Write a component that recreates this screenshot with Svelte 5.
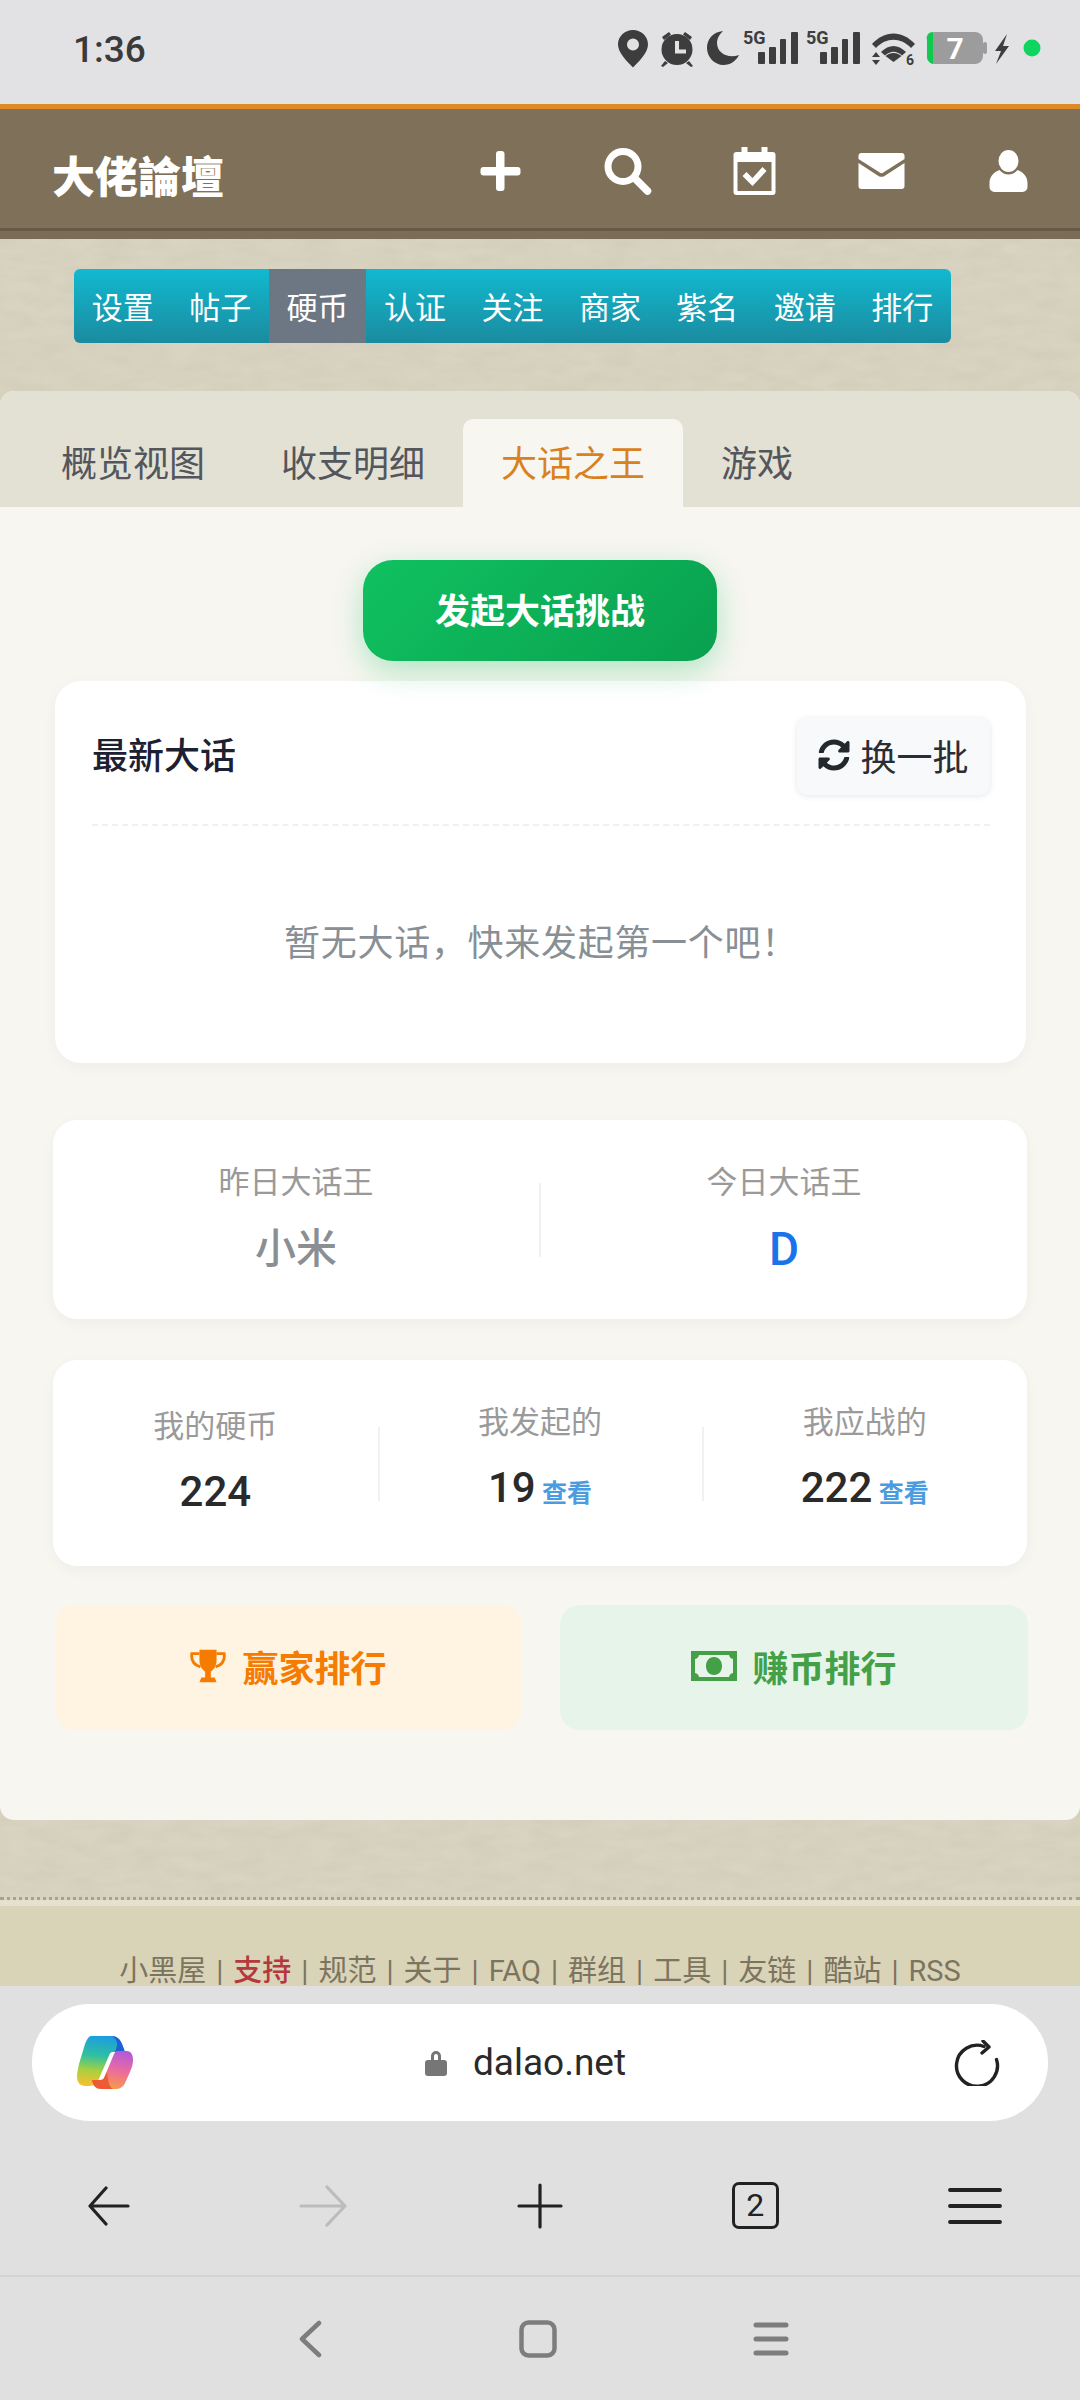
<script>
  const menu = ['设置', '帖子', '硬币', '认证', '关注', '商家', '紫名', '邀请', '排行']
  const tabs = ['概览视图', '收支明细', '大话之王', '游戏']
  const footer = ['小黑屋', '支持', '规范', '关于', 'FAQ', '群组', '工具', '友链', '酷站', 'RSS']
</script>

<div class="page">
  <div class="status">
    <span class="time">1:36</span>
    <svg class="status-icons" width="440" height="50" viewBox="610 25 440 50" fill="#3d3d3d">
      <path fill-rule="evenodd" d="M633 31c-8.500 0-15 6.500-15 14.500 0 8 9 17 15 23 6-6 15-15 15-23 0-8-6.500-14.500-15-14.500zm0 8.500a6 6 0 1 1 0 12 6 6 0 0 1 0-12z"/>
      <path fill-rule="evenodd" d="M677 35a15.500 15.500 0 1 0 0 31 15.500 15.500 0 0 0 0-31zm-2 7h4v8.500h7v4h-11z"/>
      <path d="M662 38l7-5 2 2.500-7 5.500zM692 38l-7-5-2 2.500 7 5.500zM665 62l-4 5 2 1 5-4zM689 62l4 5-2 1-5-4z"/>
      <path d="M723 32c-10 1-16 8-16 17 0 9 7.500 17 16.500 17 7 0 12.500-4 15.500-10-11 4-22-2-22-12 0-5 3-9 6-12z"/>
      <text x="743" y="45" class="fiveg">5G</text>
      <rect x="758" y="53" width="7" height="12" rx="1"/><rect x="769" y="48" width="7" height="17" rx="1"/><rect x="780" y="40" width="6" height="25" rx="1"/><rect x="791" y="33" width="7" height="32" rx="1"/>
      <text x="806" y="45" class="fiveg">5G</text>
      <rect x="820" y="53" width="7" height="12" rx="1"/><rect x="831" y="48" width="7" height="17" rx="1"/><rect x="842" y="40" width="6" height="25" rx="1"/><rect x="853" y="33" width="7" height="32" rx="1"/>
      <path d="M872 45c13-14 30-14 43 0l-4 4c-10-11-25-11-35 0z"/>
      <path d="M881 53c8-8 17-8 25 0l-4 3.500c-6-5-11-5-17 0z"/>
      <path d="M893.500 63l-8-6c5-4 11-4 16 0z"/>
      <path d="M876 53l-4 5h8zM876 66l-4-5h8z"/>
      <text x="906" y="66" class="six">6</text>
      <rect x="927" y="33" width="56" height="32" rx="8" fill="#9c9c9c"/>
      <path d="M933 33a6 6 0 0 0-6 8v16a8 8 0 0 0 6 8z" fill="#12c94f"/>
      <rect x="983" y="43" width="4" height="12" rx="2" fill="#9c9c9c"/>
      <text x="955" y="60" class="batt">7</text>
      <path d="M1007 35l-12 17h6l-5 13 13-18h-6l4-12z"/>
      <circle cx="1032" cy="49" r="8.500" fill="#0fd45f"/>
    </svg>
  </div>

  <header class="header">
    <div class="logo">大佬論壇</div>
    <nav class="head-icons">
      <svg width="42" height="44" viewBox="0 0 42 44" fill="#fff"><rect x="1" y="18" width="40" height="8.500" rx="3"/><rect x="16.500" y="2" width="8.500" height="40" rx="3"/></svg>
      <svg width="48" height="48" viewBox="0 0 48 48" fill="none" stroke="#fff"><circle cx="19.500" cy="19.500" r="15" stroke-width="7"/><path d="M31 31l13 13" stroke-width="7.500" stroke-linecap="round"/></svg>
      <svg width="42" height="48" viewBox="0 0 42 48" fill="#fff"><path fill-rule="evenodd" d="M3 5h5V0h6v5h14V0h6v5h5a3 3 0 0 1 3 3v37a3 3 0 0 1-3 3H3a3 3 0 0 1-3-3V8a3 3 0 0 1 3-3zm1 10v29h34V15z"/><path d="M9 29l4-4 6 6 10-11 4 4-14 15z"/></svg>
      <svg width="46" height="36" viewBox="0 0 46 36" fill="#fff"><path d="M3 0h40a3 3 0 0 1 3 3v3L24 20a3 3 0 0 1-2 0L0 6V3a3 3 0 0 1 3-3z"/><path d="M0 10l20 13a6 6 0 0 0 6 0l20-13v23a3 3 0 0 1-3 3H3a3 3 0 0 1-3-3z"/></svg>
      <svg width="38" height="42" viewBox="0 0 38 42" fill="#fff"><ellipse cx="19" cy="11" rx="10" ry="11"/><path d="M10 20c5 6 13 6 18 0 6 2 10 7 10 13v4a5 5 0 0 1-5 5H5a5 5 0 0 1-5-5v-4c0-6 4-11 10-13z"/></svg>
    </nav>
  </header>

  <main class="wall">
    <svg class="paper" width="1080" height="1747">
      <filter id="mottle">
        <feTurbulence type="fractalNoise" baseFrequency="0.03 0.09" numOctaves="3" seed="4"/>
        <feColorMatrix values="0 0 0 0 0.42  0 0 0 0 0.38  0 0 0 0 0.26  0.22 0 0 0 -0.06"/>
      </filter>
      <rect width="1080" height="1747" filter="url(#mottle)"/>
    </svg>

    <ul class="menu">
      {#each menu as item, i}
        <li class:on={i == 2}>{item}</li>
      {/each}
    </ul>

    <section class="panel">
      <div class="tabs">
        {#each tabs as tab, i}
          <div class="tab" class:active={i == 2}>{tab}</div>
        {/each}
      </div>

      <div class="body">
        <button class="start">发起大话挑战</button>

        <div class="card latest">
          <div class="latest-head">
            <span class="latest-title">最新大话</span>
            <button class="refresh">
              <svg width="32" height="32" viewBox="0 0 512 512" fill="#23282d"><path d="M370.720 133.280C339.458 104.008 298.888 87.962 255.848 88c-77.458.068-144.328 53.178-162.791 126.850-1.344 5.363-6.122 9.150-11.651 9.150H24.103c-7.498 0-13.194-6.807-11.807-14.176C33.933 94.924 134.813 8 256 8c66.448 0 126.791 26.136 171.315 68.685L463.030 40.970C478.149 25.851 504 36.559 504 57.941V192c0 13.255-10.745 24-24 24H345.941c-21.382 0-32.090-25.851-16.971-40.971l41.750-41.749zM32 296h134.059c21.382 0 32.090 25.851 16.971 40.971l-41.750 41.750c31.262 29.273 71.835 45.319 114.876 45.280 77.418-.070 144.315-53.144 162.787-126.849 1.344-5.363 6.122-9.150 11.651-9.150h57.304c7.498 0 13.194 6.807 11.807 14.176C478.067 417.076 377.187 504 256 504c-66.448 0-126.791-26.136-171.315-68.685L48.970 471.030C33.851 486.149 8 475.441 8 454.059V320c0-13.255 10.745-24 24-24z"/></svg>
              <span>换一批</span>
            </button>
          </div>
          <div class="empty">暂无大话，快来发起第一个吧！</div>
        </div>

        <div class="card kings">
          <div class="king">
            <div class="label">昨日大话王</div>
            <div class="king-name">小米</div>
          </div>
          <div class="king">
            <div class="label">今日大话王</div>
            <div class="king-name blue">D</div>
          </div>
        </div>

        <div class="card stats">
          <div class="stat first">
            <div class="label">我的硬币</div>
            <div class="num">224</div>
          </div>
          <div class="stat">
            <div class="label">我发起的</div>
            <div class="num">19 <a href="#top">查看</a></div>
          </div>
          <div class="stat">
            <div class="label">我应战的</div>
            <div class="num">222 <a href="#top">查看</a></div>
          </div>
        </div>

        <div class="ranks">
          <div class="rank orange">
            <svg width="38" height="36" viewBox="0 0 40 36" fill="none"><path d="M11 1h18v11c0 6-3 10-6 12v6h4l2 5H11l2-5h4v-6c-3-2-6-6-6-12z" fill="#f57c00"/><path d="M11 5H3c-1 7 2 12 9 14M29 5h8c1 7-2 12-9 14" stroke="#f57c00" stroke-width="3"/></svg>
            <span>赢家排行</span>
          </div>
          <div class="rank green">
            <svg width="46" height="30" viewBox="0 0 46 30" fill="#43a047"><path fill-rule="evenodd" d="M0 0h46v30H0zM8 4a5 5 0 0 1-4 4v14a5 5 0 0 1 4 4h30a5 5 0 0 1 4-4V8a5 5 0 0 1-4-4zM23 6c5 0 8 4 8 9s-3 9-8 9-8-4-8-9 3-9 8-9z"/><path d="M21.500 10h3v8h2v2h-7v-2h2v-5.500h-2z"/></svg>
            <span>赚币排行</span>
          </div>
        </div>
      </div>
    </section>

    <div class="seam"></div>

    <div class="foot-wrap">
      <div class="foot">
        {#each footer as link, i}
          {#if i > 0}<span class="sep">|</span>{/if}
          <span class:red={link == '支持'}>{link}</span>
        {/each}
      </div>
    </div>
  </main>

  <div class="browser">
    <div class="urlbar">
      <svg width="56" height="53" viewBox="0 0 56 53">
        <defs>
          <linearGradient id="cpA" x1="0.5" y1="0" x2="0.4" y2="1"><stop offset="0" stop-color="#1b9de0"/><stop offset="0.4" stop-color="#2fc0a0"/><stop offset="0.7" stop-color="#a8d040"/><stop offset="1" stop-color="#f7c02e"/></linearGradient>
          <linearGradient id="cpB" x1="0.6" y1="0" x2="0.4" y2="1"><stop offset="0" stop-color="#b45ad8"/><stop offset="0.5" stop-color="#ec6c9c"/><stop offset="1" stop-color="#f89c44"/></linearGradient>
        </defs>
        <path d="M14 0H34C40 0 43 3 45 8L48 16H36C34 16 33 17 32.500 18.500L21 45C19 49 15 50 11 50H8C3 50 0 46 0 41C0 36 1 33 2 28L8 8C10 3 12 0 14 0z" fill="url(#cpA)"/>
        <path d="M34 0C40 0 43 3 45 8L48 16H38L40 10C41 6 38 1 34 0z" fill="#1f5fd8"/>
        <path d="M40 15H50C54 15 56 19 56 24C56 28 55 31 53 36L48 47C46 51 43 53 38 53H25C19 53 16 50 15 44L22 44C24 44 26 44 27 42L37 18C38 16 39 15 40 15z" fill="url(#cpB)"/>
        <path d="M15 44L22 44C24 44 26 44 27 42L30 36C31 42 31 50 36 53H25C19 53 16 50 15 44z" fill="#ef5a36"/>
      </svg>
      <div class="host">
        <svg width="22" height="26" viewBox="0 0 22 26" fill="#767676"><path d="M6 10V6a5 5 0 0 1 10 0v4h3a3 3 0 0 1 3 3v10a3 3 0 0 1-3 3H3a3 3 0 0 1-3-3V13a3 3 0 0 1 3-3zm3 0h4V6a2 2 0 0 0-4 0z"/></svg>
        <span>dalao.net</span>
      </div>
      <svg width="48" height="46" viewBox="0 0 48 46" fill="none" stroke="#222" stroke-width="3.400" stroke-linecap="round" stroke-linejoin="round"><path d="M32 6.500a20.500 20.500 0 1 0 12.500 13"/><path d="M31 1l6 6-7 6"/></svg>
    </div>

    <div class="tools">
      <svg width="42" height="40" viewBox="0 0 42 40" fill="none" stroke="#222" stroke-width="3.200" stroke-linecap="round" stroke-linejoin="round"><path d="M18 2L2 20l16 18M2 20h38"/></svg>
      <svg width="48" height="42" viewBox="0 0 48 42" fill="none" stroke="#bcbcbc" stroke-width="3.200" stroke-linecap="round" stroke-linejoin="round"><path d="M28 2l18 19-18 19M46 21H2"/></svg>
      <svg width="46" height="46" viewBox="0 0 46 46" fill="none" stroke="#222" stroke-width="3.200" stroke-linecap="round"><path d="M23 2v42M2 23h42"/></svg>
      <div class="tab-count">2</div>
      <svg width="54" height="38" viewBox="0 0 54 38" fill="none" stroke="#222" stroke-width="3.800" stroke-linecap="round"><path d="M2 3h50M2 19h50M2 35h50"/></svg>
    </div>

    <div class="sysnav">
      <svg width="26" height="38" viewBox="0 0 26 38" fill="none" stroke="#7d7d7d" stroke-width="4.500" stroke-linecap="round" stroke-linejoin="round"><path d="M22 3L5 19l17 16"/></svg>
      <svg width="38" height="38" viewBox="0 0 38 38" fill="none" stroke="#7d7d7d" stroke-width="4.500"><rect x="2.500" y="2.500" width="33" height="33" rx="7"/></svg>
      <svg width="36" height="34" viewBox="0 0 36 34" fill="none" stroke="#7d7d7d" stroke-width="5" stroke-linecap="round"><path d="M3 3h30M3 17h30M3 31h30"/></svg>
    </div>
  </div>
</div>

<style>
  :global(body) {
    margin: 0;
    background: #e0e0e0;
  }
  .page {
    width: 1080px;
    height: 2400px;
    overflow: hidden;
    display: flex;
    flex-direction: column;
    font-family: Roboto, "Noto Sans CJK SC", sans-serif;
    color: #222;
  }

  .status {
    height: 104px;
    box-sizing: border-box;
    background: #e2e2e4;
    display: flex;
    align-items: center;
    justify-content: space-between;
    padding: 0 30px 6px 73px;
  }
  .time {
    font-size: 37px;
    font-weight: 500;
    color: #3a3a3a;
  }
  .status-icons text {
    font-family: Roboto, sans-serif;
    font-weight: 700;
  }
  .fiveg { font-size: 18px; }
  .six { font-size: 14px; }
  .batt { font-size: 30px; fill: #fff; text-anchor: middle; }

  .header {
    height: 135px;
    box-sizing: border-box;
    background: #7f7059;
    border-top: 5px solid #dd8a27;
    display: flex;
    align-items: center;
    justify-content: space-between;
    padding: 0 8px 6px 52px;
    box-shadow: inset 0 -8px 0 #7a6c56, inset 0 -11px 0 #665a47;
  }
  .logo {
    font-family: "Noto Sans CJK TC", sans-serif;
    font-weight: 900;
    font-size: 43px;
    color: #fff;
    padding-top: 5px;
  }
  .head-icons {
    display: flex;
    align-items: center;
  }
  .head-icons svg {
    width: 127px;
  }

  .wall {
    flex: 1;
    display: flex;
    flex-direction: column;
    position: relative;
    background: #d8d4c1;
  }
  .paper {
    position: absolute;
    top: 0;
    left: 0;
  }
  .menu {
    position: relative;
    list-style: none;
    margin: 30px 0 48px 74px;
    padding: 0;
    width: 877px;
    height: 74px;
    display: flex;
    border-radius: 6px;
    overflow: hidden;
    background: linear-gradient(#11b9d0, #1b8b9f);
  }
  .menu li {
    flex: 1;
    display: flex;
    align-items: center;
    justify-content: center;
    color: #fff;
    font-size: 31px;
    padding-bottom: 2px;
  }
  .menu li.on {
    background: #6d7683;
  }

  .panel {
    position: relative;
    background: #f7f6f0;
    border-radius: 14px;
    overflow: hidden;
    height: 1429px;
    flex: none;
  }
  .tabs {
    height: 116px;
    box-sizing: border-box;
    padding: 28px 0 0 23px;
    background: #e3e1d3;
    display: flex;
  }
  .tab {
    height: 88px;
    box-sizing: border-box;
    padding: 21px 38px 0;
    font-size: 36px;
    line-height: 50px;
    color: #53565c;
  }
  .tab.active {
    background: #f7f6f0;
    color: #d9811f;
    border-radius: 10px 10px 0 0;
  }

  .body {
    padding: 53px 54px 0 54px;
  }
  .start {
    display: block;
    width: 354px;
    height: 101px;
    margin: 0 auto 20px;
    border: 0;
    border-radius: 30px;
    padding: 0 0 5px;
    font-family: inherit;
    font-size: 35px;
    font-weight: 700;
    color: #fff;
    background: linear-gradient(135deg, #10c160, #09a04f);
    box-shadow: 0 10px 30px rgba(16, 190, 95, 0.3);
    position: relative;
    z-index: 1;
  }
  .card {
    background: #fff;
    border-radius: 26px;
    box-shadow: 0 4px 14px rgba(0, 0, 0, 0.04);
  }
  .latest {
    height: 382px;
    box-sizing: border-box;
    margin: 0 0 57px 1px;
    width: 971px;
    padding: 37px 36px 0 37px;
  }
  .latest-head {
    height: 106px;
    display: flex;
    align-items: flex-start;
    justify-content: space-between;
    border-bottom: 2px dashed #f0f0f0;
  }
  .latest-title {
    font-size: 36px;
    font-weight: 500;
    color: #1c2030;
    line-height: 78px;
  }
  .refresh {
    width: 193px;
    height: 77px;
    border: 0;
    border-radius: 10px;
    padding: 0 0 3px;
    background: #f8f9fb;
    box-shadow: 0 1px 6px rgba(0, 0, 0, 0.1);
    font-family: inherit;
    font-size: 36px;
    color: #2a2d33;
    display: flex;
    align-items: center;
    justify-content: center;
    gap: 10px;
  }
  .empty {
    margin-top: 88px;
    text-align: center;
    font-size: 36px;
    color: #888f95;
    letter-spacing: 0.7px;
  }

  .kings {
    height: 199px;
    width: 974px;
    margin-left: -1px;
    border-radius: 24px;
    display: flex;
    align-items: flex-start;
    box-sizing: border-box;
    padding-top: 41px;
    margin-bottom: 41px;
  }
  .king {
    flex: 1;
    text-align: center;
    height: 96px;
  }
  .king + .king {
    border-left: 2px solid #f1f1f1;
    margin-top: 22px;
    height: 74px;
  }
  .king + .king .label {
    margin-top: -22px;
  }
  .label {
    font-size: 31px;
    line-height: 44px;
    color: #9a9a9a;
  }
  .king-name {
    font-size: 41px;
    font-weight: 500;
    line-height: 60px;
    margin-top: 14px;
    color: #8a8f94;
  }
  .king-name.blue {
    color: #1a73e8;
    font-size: 46px;
  }

  .stats {
    height: 206px;
    width: 974px;
    margin-left: -1px;
    border-radius: 24px;
    display: flex;
    box-sizing: border-box;
    padding-top: 41px;
    margin-bottom: 39px;
  }
  .stat {
    flex: 1;
    text-align: center;
    position: relative;
  }
  .stat.first {
    padding-top: 4px;
  }
  .stat + .stat::before {
    content: "";
    position: absolute;
    left: 0;
    top: 26px;
    height: 74px;
    width: 2px;
    background: #f1f1f1;
  }
  .num {
    font-size: 42px;
    font-weight: 500;
    line-height: 56px;
    margin-top: 15px;
    color: #2a2a2a;
  }
  .num a {
    font-size: 25px;
    font-weight: 700;
    color: #4a9be0;
    text-decoration: none;
    margin-left: -4px;
  }

  .ranks {
    display: flex;
    justify-content: space-between;
    width: 973px;
    margin-left: 1px;
  }
  .rank {
    width: 466px;
    height: 125px;
    border-radius: 20px;
    display: flex;
    align-items: center;
    justify-content: center;
    gap: 15px;
    padding-bottom: 4px;
    box-sizing: border-box;
    font-size: 36px;
    font-weight: 700;
  }
  .orange {
    background: #fff3e1;
    color: #f57c00;
  }
  .green {
    width: 468px;
    background: #e7f4e9;
    color: #43a047;
  }

  .seam {
    position: relative;
    height: 80px;
    flex: none;
    box-sizing: border-box;
    border-bottom: 3px dotted #a8a28c;
  }
  .foot-wrap {
    position: relative;
    flex: 1;
    background: #d9d3b8;
    border-top: 6px solid #e6e1ce;
    display: flex;
    justify-content: center;
    align-items: flex-end;
  }
  .foot {
    display: flex;
    gap: 10px;
    font-size: 29px;
    line-height: 30px;
    color: #7d745f;
  }
  .red {
    color: #b5383f;
    font-weight: 500;
  }

  .browser {
    height: 414px;
    flex: none;
    background: #e0e0e0;
    display: flex;
    flex-direction: column;
  }
  .urlbar {
    height: 117px;
    margin: 18px 32px 0;
    background: #fff;
    border-radius: 58px;
    display: flex;
    align-items: center;
    justify-content: space-between;
    padding: 0 48px 0 45px;
  }
  .host {
    display: flex;
    align-items: center;
    gap: 26px;
    font-size: 37px;
    color: #2a2a2a;
    margin-right: 34px;
  }
  .tools {
    height: 156px;
    box-sizing: border-box;
    display: flex;
    align-items: center;
    justify-content: space-between;
    padding: 15px 78px 0 88px;
    border-bottom: 2px solid #d4d4d4;
  }
  .tab-count {
    width: 47px;
    height: 47px;
    box-sizing: border-box;
    border: 3.500px solid #222;
    border-radius: 7px;
    font-size: 32px;
    line-height: 40px;
    text-align: center;
    color: #222;
  }
  .sysnav {
    flex: 1;
    display: flex;
    align-items: center;
    justify-content: center;
    gap: 196px;
    padding-left: 6px;
  }
</style>
